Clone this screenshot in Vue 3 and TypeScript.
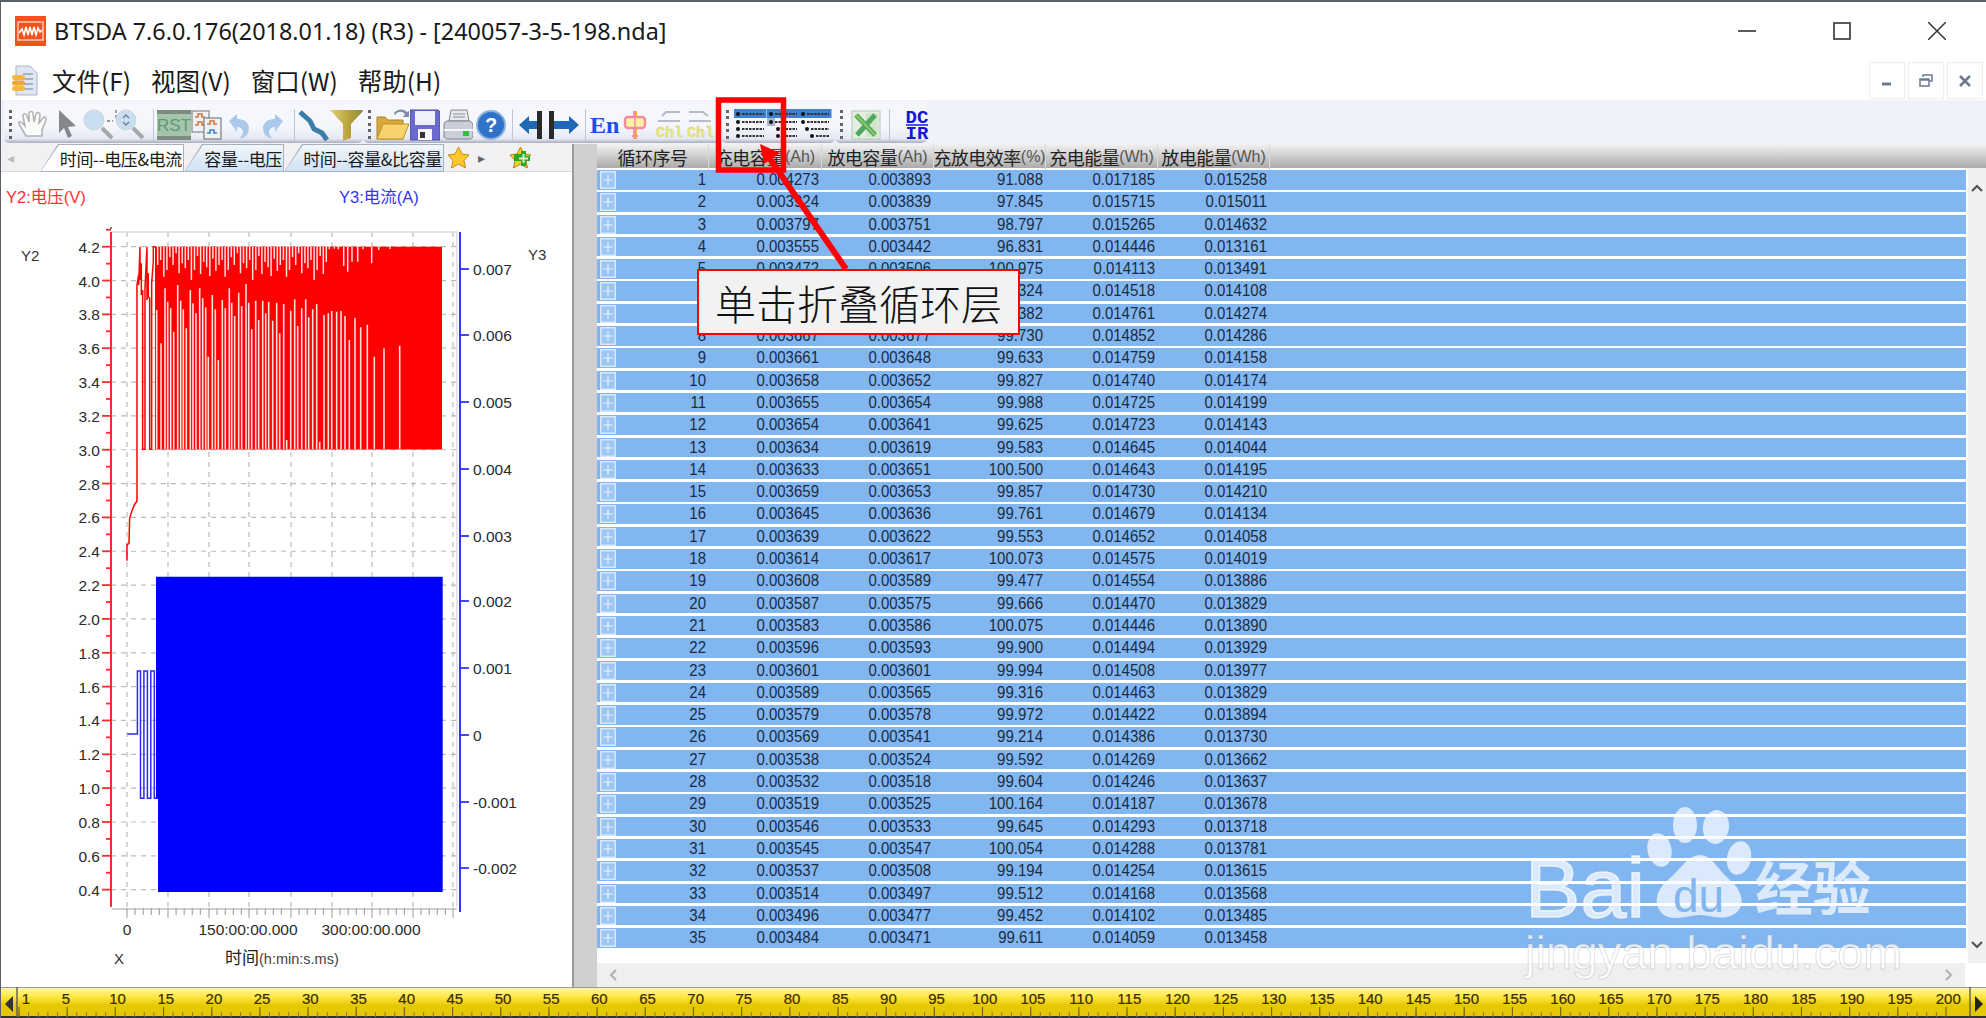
<script setup lang="ts">
const raw = `1 0.004273 0.003893 91.088 0.017185 0.015258
2 0.003924 0.003839 97.845 0.015715 0.015011
3 0.003797 0.003751 98.797 0.015265 0.014632
4 0.003555 0.003442 96.831 0.014446 0.013161
5 0.003472 0.003506 100.975 0.014113 0.013491
6 0.003570 0.003546 99.324 0.014518 0.014108
7 0.003630 0.003606 99.382 0.014761 0.014274
8 0.003667 0.003677 99.730 0.014852 0.014286
9 0.003661 0.003648 99.633 0.014759 0.014158
10 0.003658 0.003652 99.827 0.014740 0.014174
11 0.003655 0.003654 99.988 0.014725 0.014199
12 0.003654 0.003641 99.625 0.014723 0.014143
13 0.003634 0.003619 99.583 0.014645 0.014044
14 0.003633 0.003651 100.500 0.014643 0.014195
15 0.003659 0.003653 99.857 0.014730 0.014210
16 0.003645 0.003636 99.761 0.014679 0.014134
17 0.003639 0.003622 99.553 0.014652 0.014058
18 0.003614 0.003617 100.073 0.014575 0.014019
19 0.003608 0.003589 99.477 0.014554 0.013886
20 0.003587 0.003575 99.666 0.014470 0.013829
21 0.003583 0.003586 100.075 0.014446 0.013890
22 0.003596 0.003593 99.900 0.014494 0.013929
23 0.003601 0.003601 99.994 0.014508 0.013977
24 0.003589 0.003565 99.316 0.014463 0.013829
25 0.003579 0.003578 99.972 0.014422 0.013894
26 0.003569 0.003541 99.214 0.014386 0.013730
27 0.003538 0.003524 99.592 0.014269 0.013662
28 0.003532 0.003518 99.604 0.014246 0.013637
29 0.003519 0.003525 100.164 0.014187 0.013678
30 0.003546 0.003533 99.645 0.014293 0.013718
31 0.003545 0.003547 100.054 0.014288 0.013781
32 0.003537 0.003508 99.194 0.014254 0.013615
33 0.003514 0.003497 99.512 0.014168 0.013568
34 0.003496 0.003477 99.452 0.014102 0.013485
35 0.003484 0.003471 99.611 0.014059 0.013458`
const rows = raw.split('\n').map(l => l.trim().split(' '))

const headers = [
  { cn: '循环序号', unit: '' },
  { cn: '充电容量', unit: '(Ah)' },
  { cn: '放电容量', unit: '(Ah)' },
  { cn: '充放电效率', unit: '(%)' },
  { cn: '充电能量', unit: '(Wh)' },
  { cn: '放电能量', unit: '(Wh)' }
]
const menus = ['文件(F)', '视图(V)', '窗口(W)', '帮助(H)']

// indent of the four lines in each of the three tree-level buttons
const treeIcons = [[3, 3, 3, 3], [3, 3, 10, 10], [3, 3, 7, 12]]
const treeYs = [5, 13, 20, 27]

// chart scales, measured off the reference
const yV = (v: number) => 246.7 + (4.2 - v) * 169.2
const y2Major = Array.from({ length: 20 }, (_, i) => +(4.2 - i * 0.2).toFixed(1))
const y2Minor = Array.from({ length: 20 }, (_, i) => +(4.3 - i * 0.2).toFixed(1))
const y3Ticks = [
  { t: '0.007', y: 269 }, { t: '0.006', y: 335 }, { t: '0.005', y: 402 }, { t: '0.004', y: 469 },
  { t: '0.003', y: 536 }, { t: '0.002', y: 601 }, { t: '0.001', y: 668 }, { t: '0', y: 735 },
  { t: '-0.001', y: 802 }, { t: '-0.002', y: 868 }
]
const xMajor = [126, 167, 208, 248, 290, 331, 371, 412, 452]
const xMinor = xMajor.slice(0, -1).flatMap(x => [1, 2, 3, 4].map(i => x + i * 8.1))

const zx = (x: number) => (x / 3).toFixed(1)
const zy = (y: number) => (170 + y / 3).toFixed(1)
const lowSlits = [[467,420],[480,520],[492,355],[500,395],[509,415],[518,485],[530,345],[539,392],[547,418],[556,475],[568,360],[576,400],[585,430],[596,355],[605,385],[614,412],[622,560],[634,375],[643,418],[652,570],[664,390],[673,415],[685,355],[692,398],[701,438],[713,368],[722,408],[735,342],[743,398],[752,478],[764,392],[773,450],[785,392],[794,430],[803,395],[815,452],[827,398],[836,490],[848,402],[857,810],[869,422],[881,388],[890,468],[902,415],[914,388],[923,442],[935,418],[947,402],[956,815],[969,435],[982,430],[992,423],[1007,425],[1020,423],[1032,438],[1045,510],[1062,443],[1079,472],[1099,464],[1120,560],[1149,535],[1196,527]]
const lowPath = lowSlits.map(([x, y]) => `M${zx(x)} ${zy(838)}V${zy(y)}`).join('')
const topLens = [285, 270, 320, 300, 262, 285, 250, 310, 280, 295, 270, 330, 300, 258, 312, 276, 292, 318, 266, 302]
const topXs = Array.from({ length: 56 }, (_, i) => 470 + i * 9.2)
const topPath = topXs.map((x, i) => `M${zx(x)} ${zy(230)}V${zy(topLens[i % topLens.length])}`).join('')
  + [[985,238],[1000,236],[1012,238],[1028,288],[1040,305],[1053,275],[1070,275],[1086,238],[1112,280],[1133,240],[1167,237]]
    .map(([x, y]) => `M${zx(x)} ${zy(230)}V${zy(y)}`).join('')
const startTrace = 'M378 1172V1125L384 1120L386 1045L392 1025L400 1005L408 993V345L413 315V345L417 230V330L421 280V375L425 360V838H432V355L438 230V390L442 310V380L446 385V838H452V340L457 275V230H463'
const blueTrace = [[330,432],[356,432],[356,243],[364,243],[364,625],[373,625],[373,243],[382,243],[382,625],[391,625],[391,243],[400,243],[400,625],[410,625]]
  .map(([x, y], i) => `${i ? 'L' : 'M'}${(x / 2.61).toFixed(1)} ${(590 + y / 3).toFixed(1)}`).join('')

// ruler
const rulerNums = [1, ...Array.from({ length: 40 }, (_, i) => (i + 1) * 5)]
const rulerX = (n: number) => (n === 1 ? 26 : n === 5 ? 66 : 117.6 + (n - 10) * 9.635)
const smallTicks = Array.from({ length: 200 }, (_, i) => 19 + i * 9.635)
const bigTicks = Array.from({ length: 41 }, (_, i) => 19 + i * 48.175)
</script>

<template>
  <div class="app">
    <header class="titlebar">
      <svg class="logo" width="31" height="30" viewBox="0 0 31 30">
        <rect width="31" height="30" fill="#f4511e" />
        <rect x="3" y="6" width="25" height="18" fill="none" stroke="#ffc9b0" stroke-width="1.5" />
        <path d="M4 17L7 13L9 19L11 11L13 19L15 11L17 19L19 11L21 19L23 12L25 16L27 14" fill="none" stroke="#fff" stroke-width="1.6" />
      </svg>
      <span class="title">BTSDA 7.6.0.176(2018.01.18) (R3) - [240057-3-5-198.nda]</span>
      <div class="winctl">
        <svg width="18" height="18" viewBox="0 0 18 18"><path d="M0 9H18" stroke="#333" stroke-width="1.6" /></svg>
        <svg width="18" height="18" viewBox="0 0 18 18"><rect x="1" y="1" width="16" height="16" fill="none" stroke="#333" stroke-width="1.6" /></svg>
        <svg width="18" height="18" viewBox="0 0 18 18"><path d="M0 0L18 18M18 0L0 18" stroke="#333" stroke-width="1.5" /></svg>
      </div>
    </header>

    <nav class="menubar">
      <svg class="menuicon" width="26" height="31" viewBox="0 0 26 31">
        <path d="M4 1H18L25 8V30H4Z" fill="#dfe6f2" stroke="#aab4c8" />
        <path d="M11 9H21M11 14H21M11 19H21M11 24H21" stroke="#8fa0bd" stroke-width="1.5" />
        <rect x="0" y="10" width="13" height="5" rx="2.5" fill="#f4b93c" />
        <rect x="0" y="15.5" width="13" height="5" rx="2.5" fill="#eea82c" />
        <rect x="0" y="21" width="13" height="5" rx="2.5" fill="#f4b93c" />
      </svg>
      <span v-for="m in menus" :key="m" class="menu">{{ m }}</span>
      <div class="mdi">
        <span class="mdibtn"><svg width="12" height="12" viewBox="0 0 12 12"><path d="M1 9H10" stroke="#6c7a92" stroke-width="3" /></svg></span>
        <span class="mdibtn"><svg width="14" height="14" viewBox="0 0 14 14"><path d="M4 3V1H13V7H10M1 5H10V12H1ZM1 6H10" fill="none" stroke="#6c7a92" stroke-width="1.5" /></svg></span>
        <span class="mdibtn"><svg width="12" height="12" viewBox="0 0 12 12"><path d="M1 1L11 11M11 1L1 11" stroke="#6c7a92" stroke-width="2.6" /></svg></span>
      </div>
    </nav>

    <div class="toolbar">
      <div class="tbgroup g1">
        <i class="grip"></i>
        <svg width="34" height="32" viewBox="0 0 34 32"><path d="M9 27L2 15C1 12 4 12 6 15L8 17L6 7C6 4 9 4 10 7L12 13L12 4C13 2 16 2 16 4L17 13L19 5C20 3 23 3 23 6L22 14L26 9C28 7 30 9 29 11L25 21V27Z" fill="#fbfbfb" stroke="#b4b4b4" stroke-width="1.6" /></svg>
        <svg class="ml6" width="22" height="32" viewBox="0 0 22 32"><path d="M2 1V24L7 19L11 29L15 27L11 18L19 17Z" fill="#85878c" /></svg>
        <svg class="ml4" width="66" height="32" viewBox="0 0 66 32">
          <circle cx="11" cy="11" r="10" fill="#c8dff2" stroke="#d0d4dc" />
          <path d="M19 19L29 29" stroke="#a8a8a8" stroke-width="4" />
          <path d="M24 12H30M33 1V10" stroke="#777" stroke-width="1.4" stroke-dasharray="3 2" />
          <circle cx="43" cy="11" r="10" fill="#c8dff2" stroke="#d0d4dc" />
          <path d="M40 9L43 6L46 9M40 13L43 16L46 13" fill="none" stroke="#778" stroke-width="1.3" />
          <path d="M50 19L60 29" stroke="#a8a8a8" stroke-width="4" />
        </svg>
        <i class="sep"></i>
        <svg class="ml3" width="34" height="32" viewBox="0 0 34 32"><rect y="1" width="34" height="30" fill="#a4c4ab" /><rect y="1" width="34" height="4" fill="#7b8b80" /><rect y="27" width="34" height="4" fill="#7b8b80" /><text x="17" y="22" text-anchor="middle" class="rst">RST</text></svg>
        <svg width="32" height="32" viewBox="0 0 32 32">
          <rect x="1" y="2" width="17" height="21" fill="#eef1f6" stroke="#777" />
          <path d="M4 8H7V5H11V8H14M4 16H7V13H11V16H14" fill="none" stroke="#d9763a" stroke-width="1.6" />
          <rect x="13" y="9" width="17" height="21" fill="#eef1f6" stroke="#666" />
          <path d="M16 15H19V12H23V15H26" fill="none" stroke="#d9763a" stroke-width="1.6" />
          <path d="M16 24H19V21H23V24H26" fill="none" stroke="#3f86c9" stroke-width="1.6" />
        </svg>
        <svg class="ml3" width="26" height="32" viewBox="0 0 26 32"><path d="M3 12L11 5V10C20 10 25 15 22 24C20 28 16 30 14 29C18 25 19 19 11 18V23Z" fill="#a9c8ea" /></svg>
        <svg class="ml8" width="26" height="32" viewBox="0 0 26 32"><path d="M23 12L15 5V10C6 10 1 15 4 24C6 28 10 30 12 29C8 25 7 19 15 18V23Z" fill="#a9c8ea" /></svg>
        <i class="sep ml8"></i>
        <svg class="ml3" width="32" height="32" viewBox="0 0 32 32"><path d="M2 3L12 12L16 20L24 24L29 31" fill="none" stroke="#3a7da8" stroke-width="5" /></svg>
        <svg width="34" height="32" viewBox="0 0 34 32">
          <defs><linearGradient id="fnl" x1="0" x2="1" y1="0" y2="0"><stop offset="0" stop-color="#e0d27a" /><stop offset=".55" stop-color="#b9a23a" /><stop offset="1" stop-color="#8c8a3a" /></linearGradient></defs>
          <path d="M0 1H34L21 15V29L13 32V15Z" fill="url(#fnl)" />
        </svg>
      </div>
      <div class="tbgroup g2">
        <i class="grip"></i>
        <svg width="34" height="32" viewBox="0 0 34 32">
          <path d="M1 8H9L12 11H27V30H1Z" fill="#d9a83a" stroke="#a8842a" />
          <path d="M1 30L7 15H33L27 30Z" fill="#f8d26a" stroke="#b8912e" />
          <path d="M19 6C22 2 26 2 29 5L27 8H33V2L31 3C27 -1 21 0 18 4Z" fill="#7d8ea8" />
        </svg>
        <svg width="30" height="32" viewBox="0 0 30 32">
          <path d="M0 1H28L30 3V31H0Z" fill="#6a6bd0" stroke="#4a4ba8" />
          <rect x="5" y="2" width="20" height="14" fill="#eef0fa" />
          <rect x="8" y="20" width="14" height="11" fill="#f4f4fa" />
          <rect x="10" y="23" width="5" height="6" fill="#333" />
        </svg>
        <svg class="ml3" width="30" height="32" viewBox="0 0 30 32">
          <path d="M8 1H24L26 12H6Z" fill="#e6e8ee" stroke="#888" />
          <path d="M10 5H22M10 8H22" stroke="#8a8f9a" stroke-width="1.2" />
          <path d="M1 16C1 13 3 12 5 12H26C28 12 30 14 30 17V27C30 29 28 30 26 30H5C3 30 1 29 1 27Z" fill="#c9ced8" stroke="#7b818c" />
          <path d="M1 21H30" stroke="#f4f4f8" stroke-width="2" />
          <rect x="20" y="22" width="6" height="5" fill="#2fc23c" />
        </svg>
        <svg class="ml3" width="30" height="32" viewBox="0 0 30 32">
          <circle cx="15" cy="16" r="14" fill="#2f72c8" stroke="#8ab0e0" stroke-width="2" />
          <text x="15" y="23" text-anchor="middle" class="qm">?</text>
        </svg>
        <i class="sep ml6"></i>
        <svg class="ml6" width="26" height="32" viewBox="0 0 26 32"><path d="M0 16L10 7V12H19V20H10V25Z" fill="#1e68b8" /><rect x="18" y="2" width="5" height="28" fill="#2a2a2a" /></svg>
        <svg class="ml4" width="30" height="32" viewBox="0 0 30 32"><rect x="0" y="2" width="5" height="28" fill="#2a2a2a" /><path d="M30 16L20 7V12H5V20H20V25Z" fill="#1e68b8" /></svg>
        <i class="sep ml6"></i>
        <svg class="ml4" width="32" height="32" viewBox="0 0 32 32"><text x="0" y="24" class="en">En</text></svg>
        <svg width="26" height="32" viewBox="0 0 26 32">
          <path d="M13 2V30" stroke="#f6b13a" stroke-width="4" />
          <rect x="3" y="8" width="20" height="11" rx="3" fill="#fdf0a8" stroke="#f48a9a" stroke-width="2.4" />
          <path d="M13 2V30M10 27H16" stroke="#f48a9a" stroke-width="1.4" />
        </svg>
        <svg class="ml6" width="64" height="32" viewBox="0 0 64 32">
          <path d="M4 12H26M8 7L12 3H26M35 12H57M35 3H49L54 7" stroke="#b8bcc4" stroke-width="2" fill="none" />
          <text x="2" y="28" class="chl">Chl</text>
          <text x="33" y="28" class="chl">Chl</text>
        </svg>
      </div>
      <div class="tbgroup g3">
        <i class="grip"></i>
        <svg v-for="(lines, k) in treeIcons" :key="k" width="32.5" height="32" viewBox="0 0 32.5 32">
          <rect width="32.5" height="9" fill="#3c82d0" />
          <rect v-if="k === 1" y="9" width="8" height="8" fill="#aab6c8" />
          <g v-for="(x, r) in lines" :key="r">
            <circle :cx="x + 1" :cy="treeYs[r]" r="2" fill="#111" />
            <path :d="`M${x + 5} ${treeYs[r]}H30`" stroke="#333" stroke-width="2" stroke-dasharray="2.5 1" />
          </g>
        </svg>
      </div>
      <div class="tbgroup g4">
        <i class="grip"></i>
        <svg class="ml3" width="30" height="32" viewBox="0 0 30 32">
          <rect x="1" y="2" width="28" height="28" fill="#e4eee0" stroke="#b4c8b0" />
          <rect x="15" y="4" width="12" height="24" fill="#cfe4c8" />
          <path d="M5 6L24 26M24 6L6 26" stroke="#4fa860" stroke-width="5" />
          <path d="M5 6L24 26" stroke="#8cc868" stroke-width="2" />
        </svg>
        <i class="sep ml8"></i>
        <svg class="ml12" width="30" height="32" viewBox="0 0 30 32">
          <text x="15" y="14" text-anchor="middle" class="dc">DC</text>
          <path d="M4 16H26" stroke="#1414e0" stroke-width="1.5" />
          <text x="15" y="30" text-anchor="middle" class="dc">IR</text>
        </svg>
      </div>
    </div>

    <main class="body">
      <section class="left">
        <div class="tabstrip">
          <span class="arr">◂</span>
          <span class="tab active t1"><em>时间--电压&amp;电流</em></span>
          <span class="tab t2"><em>容量--电压</em></span>
          <span class="tab t3"><em>时间--容量&amp;比容量</em></span>
          <svg class="star" width="23" height="23" viewBox="0 0 23 23"><path d="M11.5 1L15 8L22 9L17 14.5L18.5 22L11.5 18L4.5 22L6 14.5L1 9L8 8Z" fill="#ffc92e" stroke="#c98a10" /></svg>
          <span class="arr2">▸</span>
          <svg class="addstar" width="23" height="23" viewBox="0 0 23 23"><path d="M11.5 1L15 8L22 9L17 14.5L18.5 22L11.5 18L4.5 22L6 14.5L1 9L8 8Z" fill="#f4d020" stroke="#a88a10" /><path d="M5 8H12V5H17V10H21V15H17V20H12V15H5Z" fill="#2aa82a" /><path d="M10 12.5H19M14.5 8V17" stroke="#d8f4c8" stroke-width="2" /></svg>
        </div>
        <svg class="chart" width="570" height="815" viewBox="0 172 570 815">
          <text x="5" y="203" class="ax red">Y2:电压(V)</text>
          <text x="338" y="203" class="ax blue">Y3:电流(A)</text>
          <text x="20" y="261" class="lbl">Y2</text>
          <text x="527" y="260" class="lbl">Y3</text>

          <g stroke="#bcbcbc" stroke-width="1.2" stroke-dasharray="5 5">
            <path v-for="x in xMajor" :key="x" :d="`M${x} 232V907`" />
            <path v-for="v in y2Major" :key="v" :d="`M110 ${yV(v)}H456`" />
          </g>
          <path d="M110 232H456V907" fill="none" stroke="#dcdcdc" stroke-width="1.5" />

          <rect x="154" y="246.7" width="287" height="202.8" fill="#f00" />
          <path :d="startTrace" transform="translate(0 170) scale(.3333)" fill="none" stroke="#f00" stroke-width="4.5" />
          <path :d="lowPath" stroke="#ffdede" stroke-width="1.6" />
          <path :d="topPath" stroke="#ffdede" stroke-width="1.5" />

          <path :d="blueTrace" fill="none" stroke="#2a2aff" stroke-width="1.5" />
          <path d="M155 576.7H441.7V892H157V798H155Z" fill="#00f" />

          <path d="M110 232V907" stroke="#ff2a2a" stroke-width="2" />
          <circle cx="110" cy="228" r="1" fill="#555" />
          <g stroke="#ff2a2a" stroke-width="1.8">
            <path v-for="v in y2Major" :key="v" :d="`M101 ${yV(v)}H110`" />
            <path v-for="v in y2Minor" :key="v" :d="`M105 ${yV(v)}H110`" />
          </g>
          <text v-for="v in y2Major" :key="v" x="99" :y="yV(v) + 6" text-anchor="end" class="num">{{ v.toFixed(1) }}</text>

          <path d="M459 232V912" stroke="#3333ff" stroke-width="2" />
          <g v-for="t in y3Ticks" :key="t.t">
            <path :d="`M459 ${t.y}H468`" stroke="#3333ff" stroke-width="1.8" />
            <text x="472" :y="t.y + 6" class="num">{{ t.t }}</text>
          </g>

          <path d="M111 909H456" stroke="#d0d0d0" stroke-width="2" />
          <g stroke="#a8a8a8" stroke-width="1.2">
            <path v-for="x in xMajor" :key="x" :d="`M${x} 908V918`" />
            <path v-for="x in xMinor" :key="x" :d="`M${x} 908V915`" />
          </g>
          <text x="126" y="935" text-anchor="middle" class="num">0</text>
          <text x="247" y="935" text-anchor="middle" class="num">150:00:00.000</text>
          <text x="370" y="935" text-anchor="middle" class="num">300:00:00.000</text>
          <text x="113" y="964" class="lbl">X</text>
          <text x="224" y="964" class="xt">时间<tspan class="xu">(h:min:s.ms)</tspan></text>
        </svg>
      </section>
      <div class="splitter"></div>
      <section class="grid">
        <div class="thead">
          <div v-for="h in headers" :key="h.cn" class="th"><span>{{ h.cn }}</span><small v-if="h.unit">{{ h.unit }}</small></div>
        </div>
        <div class="tbodywrap">
          <div class="tbody">
            <div v-for="r in rows" :key="r[0]" class="tr">
              <svg class="plus" width="16" height="18" viewBox="0 0 16 18"><rect x=".75" y=".75" width="14.5" height="16.5" fill="#9cc6f4" stroke="#d8e8fa" stroke-width="1.5" /><path d="M8 4V14M3.5 9H12.5" stroke="#d8e8fa" stroke-width="1.5" /></svg>
              <div v-for="(c, i) in r" :key="i" class="td">{{ c }}</div>
            </div>
          </div>
          <div class="vscroll">
            <svg width="14" height="10" viewBox="0 0 14 10"><path d="M2 8L7 3L12 8" fill="none" stroke="#555" stroke-width="2.2" /></svg>
            <svg width="14" height="10" viewBox="0 0 14 10"><path d="M2 2L7 7L12 2" fill="none" stroke="#555" stroke-width="2.2" /></svg>
          </div>
        </div>
        <div class="hscrollrow">
          <div class="hscroll">
            <svg width="10" height="14" viewBox="0 0 10 14"><path d="M8 2L3 7L8 12" fill="none" stroke="#b0b0b0" stroke-width="2" /></svg>
            <svg width="10" height="14" viewBox="0 0 10 14"><path d="M2 2L7 7L2 12" fill="none" stroke="#b0b0b0" stroke-width="2" /></svg>
          </div>
        </div>
      </section>
    </main>

    <svg class="ruler" width="1986" height="31" viewBox="0 0 1986 31">
      <defs>
        <linearGradient id="rul" x1="0" x2="0" y1="0" y2="1">
          <stop offset="0" stop-color="#fbf6b0" />
          <stop offset=".3" stop-color="#ffe94a" />
          <stop offset=".62" stop-color="#e6c800" />
          <stop offset="1" stop-color="#e4c60a" />
        </linearGradient>
      </defs>
      <rect width="1986" height="30" fill="url(#rul)" />
      <path d="M0 .5H1986" stroke="#9a9a9a" />
      <path d="M0 30H1986" stroke="#333" stroke-width="2" />
      <path d="M17 0V30M1970 0V30" stroke="#555" stroke-width="1.3" />
      <path d="M13 9L5 17L13 25Z" fill="#333" />
      <path d="M1975 9L1983 17L1975 25Z" fill="#222" />
      <g stroke="#8c7a20" stroke-width="1">
        <path v-for="x in smallTicks" :key="x" :d="`M${x} 25V30`" />
      </g>
      <g stroke="#7a6a10" stroke-width="1.2">
        <path v-for="x in bigTicks" :key="x" :d="`M${x} 20V30`" />
      </g>
      <text v-for="n in rulerNums" :key="n" :x="rulerX(n)" y="17" text-anchor="middle" class="rnum">{{ n }}</text>
    </svg>

    <!-- annotations painted over the screenshot -->
    <svg class="overlay" width="1986" height="1018" viewBox="0 0 1986 1018">
      <rect x="718.5" y="100" width="65" height="70" fill="none" stroke="#f00" stroke-width="5.5" />
      <path d="M846 269L768 156" stroke="#f00" stroke-width="6" />
      <path d="M760 144L780 153L764 164Z" fill="#f00" />
      <g class="wm">
        <text x="1525" y="917" class="wm-bai">Bai</text>
        <ellipse cx="1659.5" cy="850" rx="12" ry="17" transform="rotate(-12 1659.5 850)" />
        <ellipse cx="1685" cy="825" rx="12" ry="18" />
        <ellipse cx="1716" cy="827" rx="13" ry="17" transform="rotate(8 1716 827)" />
        <ellipse cx="1739" cy="858" rx="12" ry="17" transform="rotate(12 1739 858)" />
        <path d="M1700 855C1712 855 1718 870 1730 880C1742 890 1746 905 1736 913C1724 922 1712 915 1700 915C1688 915 1676 922 1664 915C1652 905 1656 890 1668 880C1680 870 1688 855 1700 855Z" />
        <text x="1755" y="910" class="wm-jy">经验</text>
      </g>
      <text x="1673" y="912" class="wm-du">du</text>
      <text x="1525" y="969" class="wm-url">jingyan.baidu.com</text>
    </svg>
    <div class="callout">单击折叠循环层</div>
  </div>
</template>

<style>
html, body { margin: 0; padding: 0; background: #fff; overflow: hidden; }
</style>

<style scoped>
.app {
  position: relative;
  width: 1986px;
  height: 1018px;
  box-sizing: border-box;
  display: flex;
  flex-direction: column;
  background: #fff;
  border-top: 2px solid #5a6068;
  border-left: 1px solid #5a6068;
  font-family: "Noto Sans", "Noto Sans CJK SC", sans-serif;
  color: #1a1a1a;
  overflow: hidden;
}
.titlebar {
  height: 58px;
  display: flex;
  align-items: center;
  padding-left: 14px;
  flex: none;
}
.title {
  margin-left: 8px;
  font-size: 23.4px;
  white-space: nowrap;
}
.winctl {
  margin-left: auto;
  display: flex;
  gap: 77px;
  padding-right: 40px;
}
.menubar {
  height: 40px;
  flex: none;
  display: flex;
  align-items: center;
  padding-left: 11px;
}
.menuicon { margin-right: 14px; }
.menu {
  font-size: 24.5px;
  margin-right: 20px;
  white-space: nowrap;
  font-family: "Noto Sans CJK SC", sans-serif;
}
.mdi {
  margin-left: auto;
  display: flex;
  gap: 3px;
  padding-right: 3px;
  height: 37px;
  align-self: flex-end;
  margin-bottom: 1px;
}
.mdibtn {
  width: 34px;
  border: 1px solid #eee;
  display: flex;
  align-items: center;
  justify-content: center;
}
.toolbar {
  height: 44px;
  flex: none;
  background: #eff2fb;
  display: flex;
  align-items: flex-start;
  border-top: 1px solid #f2f2f2;
  box-sizing: border-box;
}
.tbgroup {
  height: 42px;
  display: flex;
  align-items: center;
  box-sizing: border-box;
  padding: 5px 0 0 4px;
  background: linear-gradient(#f5f7fd 60%, #e6e9f3 90%, #a9adbc);
  border-radius: 0 0 5px 5px;
}
.g1 { width: 359px; margin-left: 3px; }
.g2 { width: 358px; }
.g3 { width: 114px; }
.g4 { width: 92px; }
.tbgroup svg { flex: none; }
.grip {
  width: 3px;
  height: 30px;
  margin: 0 5px 0 1px;
  background: repeating-linear-gradient(#666 0 3px, transparent 3px 6.5px);
  flex: none;
}
.sep { width: 1px; height: 32px; background: #c2c6d2; margin-left: 4px; flex: none; }
.ml3 { margin-left: 3px; }
.ml4 { margin-left: 4px; }
.ml6 { margin-left: 6px; }
.ml8 { margin-left: 8px; }
.ml12 { margin-left: 12px; }
.rst { font: 17px "Liberation Sans", sans-serif; fill: #5f9a72; }
.qm { font: bold 20px "Liberation Sans", sans-serif; fill: #fff; }
.en { font: bold 24px "Liberation Serif", serif; fill: #1c4fe0; }
.chl { font: bold 15px "Liberation Mono", monospace; fill: #ece86a; stroke: #c8c8a0; stroke-width: .3; }
.dc { font: bold 19px "Liberation Mono", monospace; fill: #1414e0; }

.body {
  flex: 1;
  min-height: 0;
  display: flex;
}
.left {
  width: 571px;
  flex: none;
  display: flex;
  flex-direction: column;
}
.tabstrip {
  height: 28px;
  flex: none;
  background: #f1f1f4;
  display: flex;
  align-items: stretch;
  position: relative;
  box-shadow: inset 0 -1px #d8dbe4;
}
.arr { width: 39px; color: #bbb; font-size: 14px; line-height: 28px; padding-left: 6px; box-sizing: border-box; font-family: "DejaVu Sans", sans-serif; }
.tab {
  position: relative;
  display: flex;
  align-items: center;
  justify-content: flex-end;
  background: #a8b0bc;
  clip-path: polygon(18px 0, 100% 0, 100% 100%, 0 100%);
  box-sizing: border-box;
  white-space: nowrap;
}
.tab::before {
  content: "";
  position: absolute;
  inset: 1px 1px 1px 1px;
  clip-path: polygon(18px 0, 100% 0, 100% 100%, 0 100%);
  background: linear-gradient(#f4f7fb, #cfe2f5);
}
.tab.active::before { background: #fff; }
.tab em {
  position: relative;
  font-style: normal;
  font-size: 17px;
  letter-spacing: -.35px;
  font-family: "Noto Sans CJK SC", sans-serif;
  padding-right: 2px;
}
.t1 { width: 144px; }
.t2 { width: 100px; }
.t3 { width: 160px; }
.star { margin: 2px 0 0 3px; }
.arr2 { margin-left: 8px; font-size: 14px; color: #666; line-height: 28px; font-family: "DejaVu Sans", sans-serif; }
.addstar { margin: 2px 0 0 24px; }
.chart { flex: 1; display: block; }
.ax { font: 16.5px "Liberation Sans", "Noto Sans CJK SC", sans-serif; }
.red { fill: #ff3030; }
.blue { fill: #3333ff; }
.lbl { font: 15px "Liberation Sans", sans-serif; fill: #333; }
.num { font: 15.5px "Liberation Sans", sans-serif; fill: #2a2a2a; }
.xt { font: 17px "Noto Sans CJK SC", sans-serif; fill: #222; }
.xu { font: 14.5px "Liberation Sans", sans-serif; fill: #444; }

.splitter {
  width: 25px;
  flex: none;
  background: #d0d0d0;
  border-left: 2px solid #9a9a9a;
  box-sizing: border-box;
}
.grid {
  flex: 1;
  min-width: 0;
  display: flex;
  flex-direction: column;
}
.thead {
  height: 24px;
  flex: none;
  display: grid;
  grid-template-columns: 112px 113px 112px 112px 112px 112px;
  background: linear-gradient(#f2f2f2, #ababab);
}
.th {
  display: flex;
  align-items: center;
  justify-content: center;
  font-size: 18px;
  font-family: "Noto Sans CJK SC", sans-serif;
  letter-spacing: -.5px;
  white-space: nowrap;
  border-right: 1px solid #d8d8d8;
  color: #222;
}
.th small { font: 16px "Liberation Sans", sans-serif; color: #555; letter-spacing: 0; }
.tbodywrap {
  flex: 1;
  min-height: 0;
  display: flex;
}
.tbody {
  flex: 1;
  padding-top: 2px;
  margin-right: 2px;
}
.tr {
  position: relative;
  height: 19.5px;
  margin-bottom: 2.8px;
  background: #82b6f0;
  display: grid;
  grid-template-columns: 112px 113px 112px 112px 112px 112px;
  font: 15px/17px "Liberation Sans", sans-serif;
  color: #1c2c40;
}
.td {
  text-align: right;
  padding-right: 3px;
  transform: scaleY(1.15);
}
.plus { position: absolute; left: 3px; top: 1px; }
.vscroll {
  width: 18px;
  flex: none;
  background: #f0f0f0;
  display: flex;
  flex-direction: column;
  justify-content: space-between;
  align-items: center;
  padding: 15px 0 13px;
  box-sizing: border-box;
}
.hscrollrow { height: 24px; flex: none; }
.hscroll {
  width: 1368px;
  height: 24px;
  background: #efefef;
  display: flex;
  align-items: center;
  justify-content: space-between;
  padding: 0 11px;
  box-sizing: border-box;
}
.ruler { flex: none; display: block; margin-left: -1px; }
.rnum { font: 15px "Liberation Sans", sans-serif; fill: #3a2a00; stroke: #3a2a00; stroke-width: .2; }

.overlay {
  position: absolute;
  left: -1px;
  top: -2px;
  pointer-events: none;
}
.wm { fill: #fff; fill-opacity: .7; }
.wm-bai { font: 83px "Liberation Sans", sans-serif; stroke: #fff; stroke-width: 1.5; stroke-opacity: .7; }
.wm-jy { font: bold 58px "Noto Sans CJK SC", sans-serif; }
.wm-du { font: 46px "Liberation Sans", sans-serif; fill: #82b6f0; }
.wm-url {
  font: 46.8px "Liberation Sans", sans-serif;
  fill: #fff;
  fill-opacity: .75;
  stroke: #8a8a8a;
  stroke-opacity: .28;
  stroke-width: 1;
}
.callout {
  position: absolute;
  left: 696px;
  top: 267px;
  width: 323px;
  height: 66px;
  box-sizing: border-box;
  border: 2.5px solid #f00;
  background: #f2f2f2;
  display: flex;
  align-items: center;
  justify-content: center;
  font-size: 41px;
  font-weight: 300;
  font-family: "Noto Sans CJK SC", sans-serif;
  color: #111;
  white-space: nowrap;
}
</style>
